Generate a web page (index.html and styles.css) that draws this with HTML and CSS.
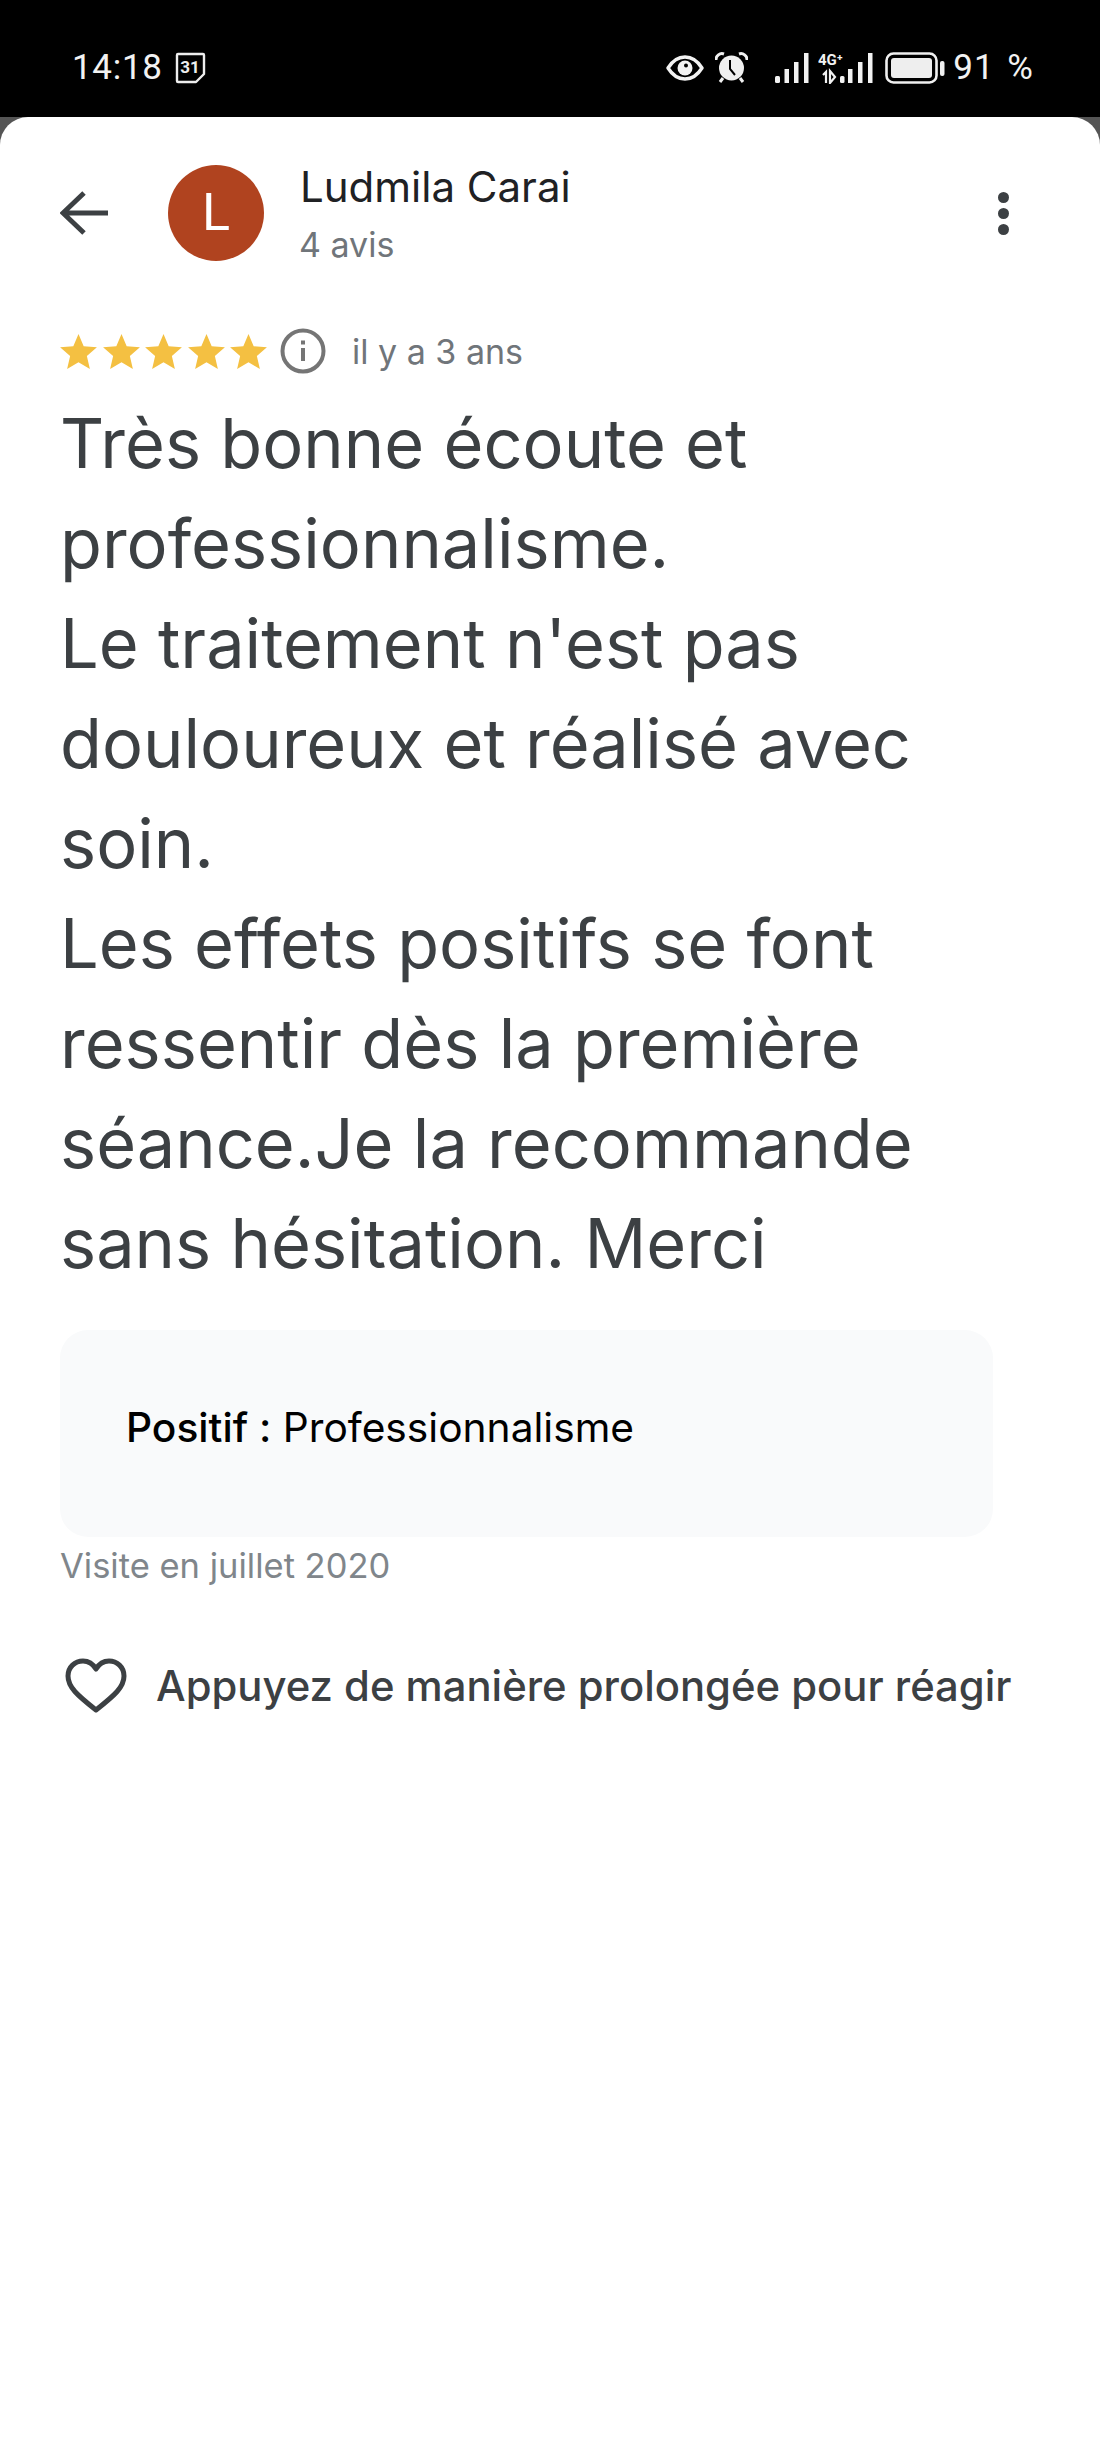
FILE: index.html
```html
<!DOCTYPE html>
<html lang="fr">
<head>
  <meta charset="UTF-8">
  <meta name="viewport" content="width=device-width, initial-scale=1.0">
  <title>Avis</title>
  <link rel="stylesheet" href="styles.css">
</head>
<body>
  <div class="status-bar">
    <div class="status-left">
      <span class="clock">14:18</span>
      <svg class="cal-icon" width="31" height="32" viewBox="0 0 31 32">
        <path d="M3 2h25a1 1 0 0 1 1 1v19l-8 8H3a1 1 0 0 1-1-1V3a1 1 0 0 1 1-1z" fill="none" stroke="#eee" stroke-width="2.4" stroke-linejoin="round"/>
        <text x="15" y="21" text-anchor="middle" class="cal-num">31</text>
      </svg>
    </div>
    <div class="status-right">
      <svg width="38" height="26" viewBox="0 0 38 26">
        <path d="M2 13C7 5 13 2 19 2s12 3 17 11c-5 8-11 11-17 11S7 21 2 13z" fill="none" stroke="#f2f2f2" stroke-width="3.4" stroke-linejoin="round"/>
        <circle cx="19" cy="13" r="7.5" fill="#f2f2f2"/>
        <circle cx="20" cy="10.5" r="2" fill="#000"/>
      </svg>
      <svg class="ic-alarm" width="33" height="32" viewBox="0 0 33 32">
        <circle cx="16.5" cy="16" r="12.5" fill="#f0f0f0"/>
        <path d="M1 8a6 6 0 0 1 8-6M32 8a6 6 0 0 0-8-6" fill="none" stroke="#f0f0f0" stroke-width="3"/>
        <path d="M5 30l3-4M28 30l-3-4" stroke="#f0f0f0" stroke-width="3"/>
        <path d="M15 8v9l5 6" fill="none" stroke="#000" stroke-width="2"/>
      </svg>
      <svg class="ic-signal" width="34" height="32" viewBox="0 0 34 32">
        <rect x="0" y="24" width="5" height="7" rx="1.5" fill="#f2f2f2"/>
        <rect x="9.5" y="17" width="4.5" height="14" fill="#f2f2f2"/>
        <rect x="19" y="10" width="4.5" height="21" fill="#f2f2f2"/>
        <rect x="29" y="1" width="4.5" height="30" fill="#f2f2f2"/>
      </svg>
      <svg class="ic-signal-4g" width="56" height="32" viewBox="0 0 56 32">
        <text x="0" y="13" class="net-label">4G⁺</text>
        <path d="M8 31V20l-3 3M12 19l5 6-5 6z" fill="none" stroke="#f2f2f2" stroke-width="2.2"/>
        <rect x="22" y="24" width="4.5" height="7" rx="1.5" fill="#f2f2f2"/>
        <rect x="30" y="17" width="4.5" height="14" fill="#f2f2f2"/>
        <rect x="40" y="10" width="4.5" height="21" fill="#f2f2f2"/>
        <rect x="50" y="1" width="4.5" height="30" fill="#f2f2f2"/>
      </svg>
      <svg class="ic-battery" width="60" height="32" viewBox="0 0 60 32">
        <rect x="1.5" y="1.5" width="50" height="29" rx="7" fill="none" stroke="#f0f0f0" stroke-width="2.6"/>
        <rect x="6" y="6" width="41" height="20" rx="3" fill="#eee"/>
        <rect x="55" y="9" width="4.5" height="15" rx="2" fill="#f0f0f0"/>
      </svg>
      <span class="battery-text">91 %</span>
    </div>
  </div>

  <div class="sheet-wrap">
    <div class="sheet">
      <div class="review-header">
        <svg class="back-icon" width="48" height="44" viewBox="0 0 48 44">
          <path d="M48 22H4M24 2L3 22l21 20" fill="none" stroke="#3c4043" stroke-width="5"/>
        </svg>
        <div class="avatar">L</div>
        <div class="author">
          <div class="author-name">Ludmila Carai</div>
          <div class="author-count">4 avis</div>
        </div>
        <div class="more-btn"><span></span><span></span><span></span></div>
      </div>

      <div class="rating-row">
        <div class="stars">
          <svg width="37" height="35" viewBox="2 2 20 19"><path d="M12 17.27L18.18 21l-1.64-7.03L22 9.24l-7.19-.61L12 2 9.19 8.63 2 9.24l5.46 4.73L5.82 21z"/></svg>
          <svg width="37" height="35" viewBox="2 2 20 19"><path d="M12 17.27L18.18 21l-1.64-7.03L22 9.24l-7.19-.61L12 2 9.19 8.63 2 9.24l5.46 4.73L5.82 21z"/></svg>
          <svg width="37" height="35" viewBox="2 2 20 19"><path d="M12 17.27L18.18 21l-1.64-7.03L22 9.24l-7.19-.61L12 2 9.19 8.63 2 9.24l5.46 4.73L5.82 21z"/></svg>
          <svg width="37" height="35" viewBox="2 2 20 19"><path d="M12 17.27L18.18 21l-1.64-7.03L22 9.24l-7.19-.61L12 2 9.19 8.63 2 9.24l5.46 4.73L5.82 21z"/></svg>
          <svg width="37" height="35" viewBox="2 2 20 19"><path d="M12 17.27L18.18 21l-1.64-7.03L22 9.24l-7.19-.61L12 2 9.19 8.63 2 9.24l5.46 4.73L5.82 21z"/></svg>
        </div>
        <svg class="info-icon" width="46" height="46" viewBox="0 0 46 46">
          <circle cx="23" cy="23" r="20.5" fill="none" stroke="#757575" stroke-width="4"/>
          <rect x="21" y="20" width="4" height="13" fill="#757575"/>
          <rect x="21" y="12.5" width="4" height="4" fill="#757575"/>
        </svg>
        <span class="review-date">il y a 3 ans</span>
      </div>

      <p class="review-text">Très bonne écoute et<br>professionnalisme.<br>Le traitement n'est pas<br>douloureux et réalisé avec<br>soin.<br>Les effets positifs se font<br>ressentir dès la première<br>séance.Je la recommande<br>sans hésitation. Merci</p>

      <div class="attr-card"><b>Positif :</b> Professionnalisme</div>
      <div class="visit-date">Visite en juillet 2020</div>

      <div class="react-row">
        <svg class="heart-icon" width="62" height="56" viewBox="0 0 62 56">
          <path d="M31 52C12 37 3 29 3 18 3 9 10 3 18 3c5 0 10 3 13 8 3-5 8-8 13-8 8 0 15 6 15 15 0 11-9 19-28 34z" fill="none" stroke="#3c4043" stroke-width="5" stroke-linejoin="round"/>
        </svg>
        <span>Appuyez de manière prolongée pour réagir</span>
      </div>
    </div>
  </div>
</body>
</html>
```

FILE: styles.css
```css
* {
  box-sizing: border-box;
}
html, body {
  height: 100%;
}
body {
  margin: 0;
  font-family: Inter, Roboto, sans-serif;
  background-color: #000;
  display: flex;
  flex-direction: column;
  overflow: hidden;
}
.status-bar {
  height: 117px;
  flex: none;
  display: flex;
  justify-content: space-between;
  align-items: center;
  padding: 18px 66px 0 72px;
  background: #000;
  color: #f2f2f2;
  font-family: Roboto, sans-serif;
}
.status-left,
.status-right {
  display: flex;
  align-items: center;
}
.clock {
  font-size: 35px;
  letter-spacing: .7px;
}
.cal-icon {
  margin-left: 12px;
}
.cal-num {
  font-size: 17px;
  font-weight: 700;
  fill: #eee;
}
.ic-alarm {
  margin-left: 11px;
}
.ic-signal {
  margin-left: 27px;
}
.ic-signal-4g {
  margin-left: 9px;
}
.ic-battery {
  margin-left: 11px;
}
.net-label {
  font-size: 15px;
  font-weight: 700;
  fill: #f2f2f2;
}
.battery-text {
  margin-left: 8px;
  font-size: 35px;
  letter-spacing: 1px;
  word-spacing: 3px;
}

.sheet-wrap {
  flex: 1;
  background: #555;
  display: flex;
}
.sheet {
  flex: 1;
  background: #fff;
  border-radius: 28px 28px 0 0;
  padding: 48px 60px 0;
}
.review-header {
  display: flex;
  align-items: center;
  height: 96px;
}
.back-icon {
  flex: none;
}
.avatar {
  width: 96px;
  height: 96px;
  margin-left: 60px;
  border-radius: 50%;
  background: #b0431f;
  color: #fff;
  font-family: Roboto, sans-serif;
  font-size: 52px;
  line-height: 96px;
  text-align: center;
  flex: none;
}
.author {
  margin-left: 36px;
  flex: 1;
}
.author-name {
  font-size: 42px;
  line-height: 52px;
  color: #202124;
  margin-top: 3px;
}
.author-count {
  font-size: 34px;
  line-height: 48px;
  margin-top: 8px;
  margin-left: -1px;
  color: #70757a;
}
.more-btn {
  display: flex;
  flex-direction: column;
  gap: 5px;
  margin-right: 31px;
}
.more-btn span {
  width: 11px;
  height: 11px;
  border-radius: 50%;
  background: #3c4043;
}

.rating-row {
  display: flex;
  align-items: center;
  margin-top: 68px;
  height: 44px;
}
.stars {
  display: flex;
  gap: 5.5px;
  width: 207px;
}
.stars svg {
  fill: #f4c042;
  flex: none;
}
.info-icon {
  margin-left: 13px;
  flex: none;
}
.review-date {
  margin-left: 26px;
  font-size: 34px;
  color: #70757a;
}
.review-text {
  margin: 21px 0 0;
  font-size: 68.5px;
  line-height: 100px;
  color: #3c4043;
}
.attr-card {
  margin-top: 36px;
  width: 933px;
  height: 207px;
  padding: 72px 66px 0;
  border-radius: 28px;
  background: #f9fafb;
  font-size: 40.7px;
  line-height: 52px;
  color: #000;
}
.attr-card b {
  font-weight: 500;
}
.visit-date {
  margin-top: 7px;
  font-size: 34.5px;
  line-height: 44px;
  color: #80868b;
}
.react-row {
  display: flex;
  align-items: center;
  margin-top: 70px;
  font-size: 41.8px;
  font-weight: 500;
  color: #3c4043;
}
.heart-icon {
  margin-left: 5px;
  margin-right: 29px;
  flex: none;
}
```
